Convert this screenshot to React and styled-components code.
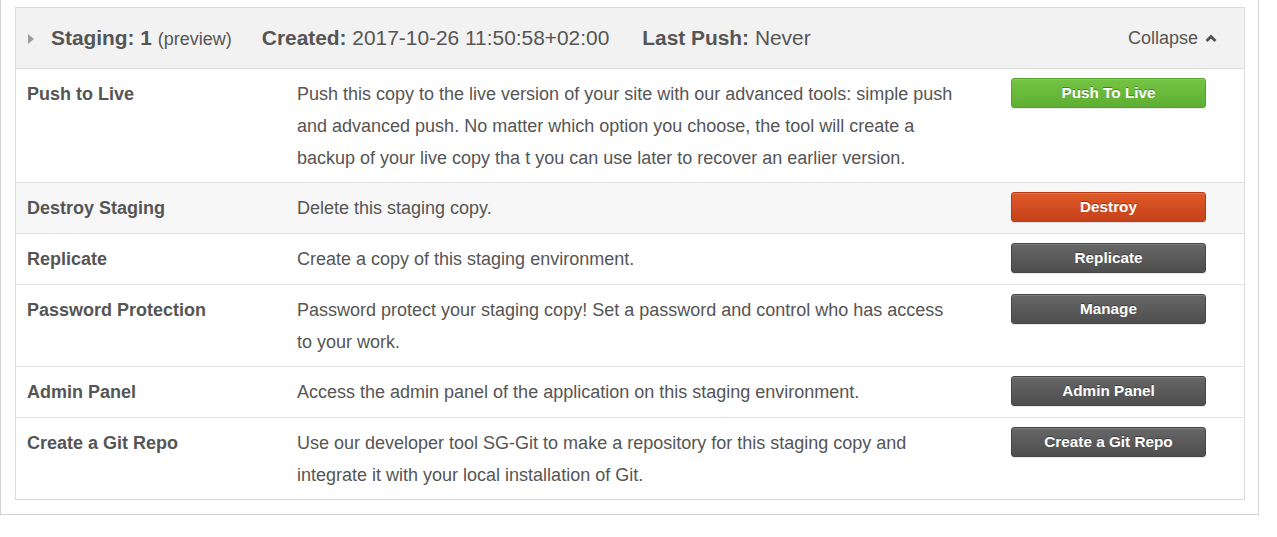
import React from "react";
import styled, { createGlobalStyle } from "styled-components";

const Global = createGlobalStyle`
  html, body { margin: 0; padding: 0; background: #fff; }
  body { font-family: "Liberation Sans", Arial, Helvetica, sans-serif; color: #555; }
`;

const Outer = styled.div`
  width: 1259px;
  box-sizing: border-box;
  border: 1px solid #d4d4d4;
  border-top: none;
  padding: 7px 13px 14px 14px;
  background: #fff;
`;

const Panel = styled.div`
  border: 1px solid #dcdcdc;
  background: #fff;
`;

const Header = styled.div`
  height: 60px;
  display: flex;
  align-items: center;
  background: #f2f2f2;
  border-bottom: 1px solid #dcdcdc;
  padding: 0 27px 0 11px;
  font-size: 20.9px;
  color: #555;
`;

const Caret = styled.span`
  width: 0;
  height: 0;
  border-top: 5px solid transparent;
  border-bottom: 5px solid transparent;
  border-left: 6px solid #9c9c9c;
  margin: 1px 17px 0 1px;
`;

const Meta = styled.span`
  margin-right: ${(p) => p.$gap || 30}px;
  white-space: nowrap;
  b { font-weight: bold; }
`;

const Small = styled.span`
  font-size: 18px;
`;

const Collapse = styled.button`
  margin-left: auto;
  display: flex;
  align-items: center;
  gap: 7px;
  background: none;
  border: none;
  padding: 0;
  font-family: inherit;
  font-size: 18px;
  color: #555;
  cursor: pointer;
`;

const Row = styled.div`
  display: grid;
  grid-template-columns: 270px 1fr 195px;
  align-items: start;
  padding: 9px 38px 8px 11px;
  background: ${(p) => (p.$shade ? "#f7f7f7" : "#fff")};
  border-bottom: 1px solid #e2e2e2;
  &:last-child { border-bottom: none; }
`;

const Label = styled.div`
  font-weight: bold;
  font-size: 18px;
  line-height: 32px;
  color: #555;
`;

const Desc = styled.div`
  font-size: 18px;
  line-height: 32px;
  color: #555;
  max-width: 658px;
`;

const tones = {
  green: { top: "#74c444", bottom: "#5eae33", border: "#56a22d" },
  red: { top: "#df5a28", bottom: "#c7411b", border: "#b53a16" },
  dark: { top: "#676767", bottom: "#4e4e4e", border: "#454545" },
};

const ActionButton = styled.button`
  width: 195px;
  height: 30px;
  margin: 0 0 3px;
  border-radius: 3px;
  border: 1px solid ${(p) => tones[p.$tone].border};
  background: linear-gradient(${(p) => tones[p.$tone].top}, ${(p) => tones[p.$tone].bottom});
  color: #fff;
  font-family: "Liberation Sans", Arial, sans-serif;
  font-weight: bold;
  font-size: 15.3px;
  text-shadow: 0 -1px 0 rgba(0, 0, 0, 0.35);
  box-shadow: inset 0 1px 0 rgba(255, 255, 255, 0.15), 0 1px 1px rgba(0, 0, 0, 0.1);
  cursor: pointer;
  padding: 0;
`;

const rows = [
  {
    label: "Push to Live",
    desc: "Push this copy to the live version of your site with our advanced tools: simple push and advanced push. No matter which option you choose, the tool will create a backup of your live copy tha t you can use later to recover an earlier version.",
    btn: "Push To Live",
    tone: "green",
  },
  { label: "Destroy Staging", desc: "Delete this staging copy.", btn: "Destroy", tone: "red", shade: true },
  { label: "Replicate", desc: "Create a copy of this staging environment.", btn: "Replicate", tone: "dark" },
  {
    label: "Password Protection",
    desc: "Password protect your staging copy! Set a password and control who has access to your work.",
    btn: "Manage",
    tone: "dark",
  },
  {
    label: "Admin Panel",
    desc: "Access the admin panel of the application on this staging environment.",
    btn: "Admin Panel",
    tone: "dark",
  },
  {
    label: "Create a Git Repo",
    desc: "Use our developer tool SG-Git to make a repository for this staging copy and integrate it with your local installation of Git.",
    btn: "Create a Git Repo",
    tone: "dark",
  },
];

export default function App() {
  return (
    <>
      <Global />
      <Outer>
        <Panel>
          <Header>
            <Caret />
            <Meta $gap={30}>
              <b>Staging: 1</b> <Small>(preview)</Small>
            </Meta>
            <Meta $gap={33}>
              <b>Created:</b> 2017-10-26 11:50:58+02:00
            </Meta>
            <Meta>
              <b>Last Push:</b> Never
            </Meta>
            <Collapse>
              Collapse
              <svg width="12" height="8" viewBox="0 0 12 8">
                <polyline points="1.5,7 6,2.5 10.5,7" fill="none" stroke="#555" strokeWidth="3" />
              </svg>
            </Collapse>
          </Header>
          {rows.map((r) => (
            <Row key={r.label} $shade={r.shade}>
              <Label>{r.label}</Label>
              <Desc>{r.desc}</Desc>
              <ActionButton $tone={r.tone}>{r.btn}</ActionButton>
            </Row>
          ))}
        </Panel>
      </Outer>
    </>
  );
}
